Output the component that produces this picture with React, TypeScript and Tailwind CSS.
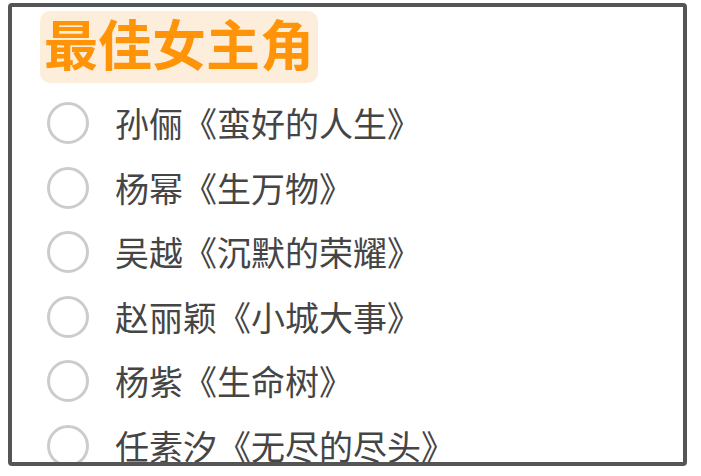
const actresses = [
  "孙俪《蛮好的人生》",
  "杨幂《生万物》",
  "吴越《沉默的荣耀》",
  "赵丽颖《小城大事》",
  "杨紫《生命树》",
  "任素汐《无尽的尽头》",
];

export default function App() {
  return (
    <div
      className="w-[701px] h-[476px] bg-white pt-[3px] pl-[8px]"
      style={{ fontFamily: '"Noto Sans CJK SC", "Noto Sans", sans-serif' }}
    >
      <div className="w-[679px] h-[463px] border-4 border-[#555555] rounded-[4px] overflow-hidden pt-[4px]">
        {/* Category heading */}
        <div className="ml-[28px] inline-flex items-center h-[72px] px-[4px] pb-[8px] rounded-[10px] bg-[#fdeedc]">
          <span className="text-[54px] leading-none font-bold text-[#ff9408]">最佳女主角</span>
        </div>

        {/* Nominee options */}
        <div className="mt-[8px]">
          {actresses.map((name) => (
            <label key={name} className="flex items-center h-[64.5px] pl-[35px] gap-[26px]">
              <span className="w-[42px] h-[42px] rounded-full border-[3px] border-[#cccccc] shrink-0" />
              <span className="text-[34px] leading-none text-[#454545]">{name}</span>
            </label>
          ))}
        </div>
      </div>
    </div>
  );
}
